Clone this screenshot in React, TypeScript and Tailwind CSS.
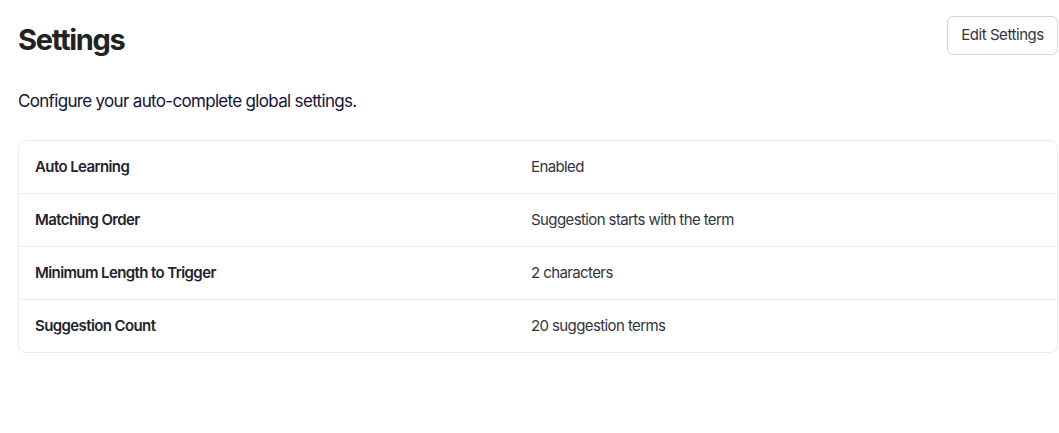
import React from 'react';

const rows = [
  { label: 'Auto Learning', value: 'Enabled' },
  { label: 'Matching Order', value: 'Suggestion starts with the term' },
  { label: 'Minimum Length to Trigger', value: '2 characters' },
  { label: 'Suggestion Count', value: '20 suggestion terms' },
];

const App: React.FC = () => {
  return (
    <div className="min-h-screen bg-white pl-[18px] pr-px font-['Inter',sans-serif]">
      <div className="flex items-start justify-between pt-4">
        <h1 className="mt-[7px] text-[29px] font-bold leading-[34px] tracking-[-0.045em] text-[#222]">Settings</h1>
        <button className="h-[39px] w-[111px] rounded-md border border-[#d4d4dc] bg-white text-[15px] tracking-[-0.03em] text-[#333340]">
          Edit Settings
        </button>
      </div>

      <p className="mt-[32px] text-[17px] leading-6 tracking-[-0.04em] text-[#14123a]">
        Configure your auto-complete global settings.
      </p>

      <div className="mt-[27px] rounded-lg border border-[#ececf2] bg-white">
        {rows.map((row, i) => (
          <div
            key={row.label}
            className={`flex items-center px-4 ${i > 0 ? 'h-[53px] border-t border-[#ececf2]' : 'h-[52px]'}`}
          >
            <div className="w-[496px] text-[15px] font-semibold tracking-[-0.04em] text-[#23232e]">{row.label}</div>
            <div className="text-[15px] tracking-[-0.04em] text-[#33333d]">{row.value}</div>
          </div>
        ))}
      </div>
    </div>
  );
};

export default App;
